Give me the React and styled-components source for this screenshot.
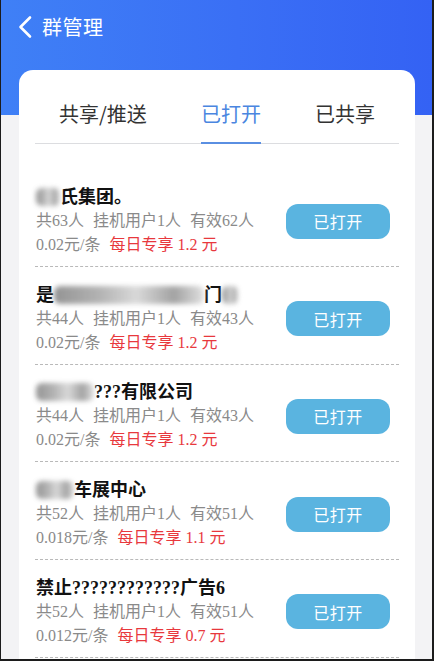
import React from "react";
import styled, { createGlobalStyle } from "styled-components";

const GlobalStyle = createGlobalStyle`
  html, body {
    margin: 0;
    padding: 0;
    background: #f3f3f5;
  }
  * {
    box-sizing: border-box;
  }
`;

const SERIF = `"Liberation Serif", "Noto Sans CJK SC", serif`;
const SANS = `"Noto Sans CJK SC", "Noto Sans", sans-serif`;

const groups = [
  {
    blurBefore: 24,
    name: "氏集团。",
    total: 63,
    hang: 1,
    valid: 62,
    price: "0.02",
    daily: "1.2",
  },
  {
    name: "是",
    blurAfter: 150,
    tail: "门",
    tailBlur: 16,
    total: 44,
    hang: 1,
    valid: 43,
    price: "0.02",
    daily: "1.2",
  },
  {
    blurBefore: 58,
    name: "???有限公司",
    total: 44,
    hang: 1,
    valid: 43,
    price: "0.02",
    daily: "1.2",
  },
  {
    blurBefore: 38,
    name: "车展中心",
    total: 52,
    hang: 1,
    valid: 51,
    price: "0.018",
    daily: "1.1",
  },
  {
    name: "禁止????????????广告6",
    total: 52,
    hang: 1,
    valid: 51,
    price: "0.012",
    daily: "0.7",
  },
];

const Frame = styled.div`
  width: 434px;
  height: 661px;
  overflow: hidden;
  position: relative;
  background: #f3f3f5;
  border-left: 1px solid #1c1c1c;
  border-right: 2px solid #1c1c1c;
  border-bottom: 2px solid #1c1c1c;
`;

const Header = styled.div`
  height: 115px;
  background: linear-gradient(90deg, #3f80f6 0%, #3a6ff5 55%, #3462f4 100%);
  padding: 12px 0 0 15px;
  display: flex;
  align-items: flex-start;
  gap: 8px;
  color: #fff;
`;

const Title = styled.h1`
  margin: 0;
  font-family: ${SANS};
  font-weight: 400;
  font-size: 20px;
  line-height: 30px;
  letter-spacing: 0.5px;
`;

const BackIcon = styled.svg`
  width: 18px;
  height: 30px;
`;

const Card = styled.div`
  margin: -45px 17px 0 18px;
  background: #fff;
  border-radius: 14px 14px 0 0;
  padding: 0 16px;
  min-height: 600px;
`;

const Tabs = styled.div`
  display: flex;
  justify-content: space-between;
  padding: 30px 24px 0 24px;
  border-bottom: 1px solid #dcdde0;
`;

const Tab = styled.div`
  font-family: ${SANS};
  font-size: 20px;
  line-height: 28px;
  padding-bottom: 14px;
  margin-bottom: -1px;
  color: ${({ active }) => (active ? "#4a86e0" : "#333")};
  border-bottom: 2px solid
    ${({ active }) => (active ? "#5a8fe2" : "transparent")};
`;

const List = styled.div`
  padding-top: 41px;
`;

const Item = styled.div`
  display: flex;
  align-items: center;
  justify-content: space-between;
  padding: 15.7px 9px 9px 1px;
  border-bottom: 1px dashed #b9b9b9;
  &:first-child {
    padding-top: 0;
  }
`;

const Info = styled.div`
  display: flex;
  flex-direction: column;
`;

const Name = styled.div`
  font-family: ${SERIF};
  font-weight: 700;
  font-size: 18px;
  line-height: 24px;
  color: #111;
  display: flex;
  align-items: center;
  white-space: nowrap;
`;

const Blur = styled.span`
  display: inline-block;
  width: ${({ w }) => w}px;
  height: 18px;
  border-radius: 6px;
  background: linear-gradient(
    90deg,
    #7a7a7a 0%,
    #a0a0a0 30%,
    #d0d0d0 55%,
    #8c8c8c 80%,
    #dadada 100%
  );
  filter: blur(2.5px);
  opacity: 0.8;
`;

const Stats = styled.div`
  font-family: ${SERIF};
  font-size: 16px;
  line-height: 24px;
  color: #8a8a8a;
  display: flex;
  gap: 9px;
  white-space: nowrap;
`;

const Price = styled.div`
  font-family: ${SERIF};
  font-size: 16px;
  line-height: 24px;
  color: #8a8a8a;
  display: flex;
  gap: 9px;
  white-space: nowrap;
`;

const Daily = styled.span`
  color: #e8383d;
`;

const OpenButton = styled.button`
  width: 104px;
  height: 35px;
  border: none;
  border-radius: 12px;
  background: #5ab4e0;
  color: #fff;
  font-family: ${SANS};
  font-size: 16px;
  letter-spacing: 0.5px;
  cursor: pointer;
`;

const tabs = ["共享/推送", "已打开", "已共享"];

const GroupRow = ({ g }) => (
  <Item>
    <Info>
      <Name>
        {g.blurBefore && <Blur w={g.blurBefore} />}
        {g.name}
        {g.blurAfter && <Blur w={g.blurAfter} />}
        {g.tail}
        {g.tailBlur && <Blur w={g.tailBlur} />}
      </Name>
      <Stats>
        <span>共{g.total}人</span>
        <span>挂机用户{g.hang}人</span>
        <span>有效{g.valid}人</span>
      </Stats>
      <Price>
        <span>{g.price}元/条</span>
        <Daily>每日专享 {g.daily} 元</Daily>
      </Price>
    </Info>
    <OpenButton>已打开</OpenButton>
  </Item>
);

const App = () => {
  return (
    <Frame>
      <GlobalStyle />
      <Header>
        <BackIcon viewBox="0 0 18 30">
          <path
            d="M14 5.5 L4.5 15 L14 24.5"
            fill="none"
            stroke="#fff"
            strokeWidth="2.6"
            strokeLinecap="round"
            strokeLinejoin="round"
          />
        </BackIcon>
        <Title>群管理</Title>
      </Header>
      <Card>
        <Tabs>
          {tabs.map((t) => (
            <Tab key={t} active={t === "已打开"}>
              {t}
            </Tab>
          ))}
        </Tabs>
        <List>
          {groups.map((g, i) => (
            <GroupRow key={i} g={g} />
          ))}
        </List>
      </Card>
    </Frame>
  );
};

export default App;
